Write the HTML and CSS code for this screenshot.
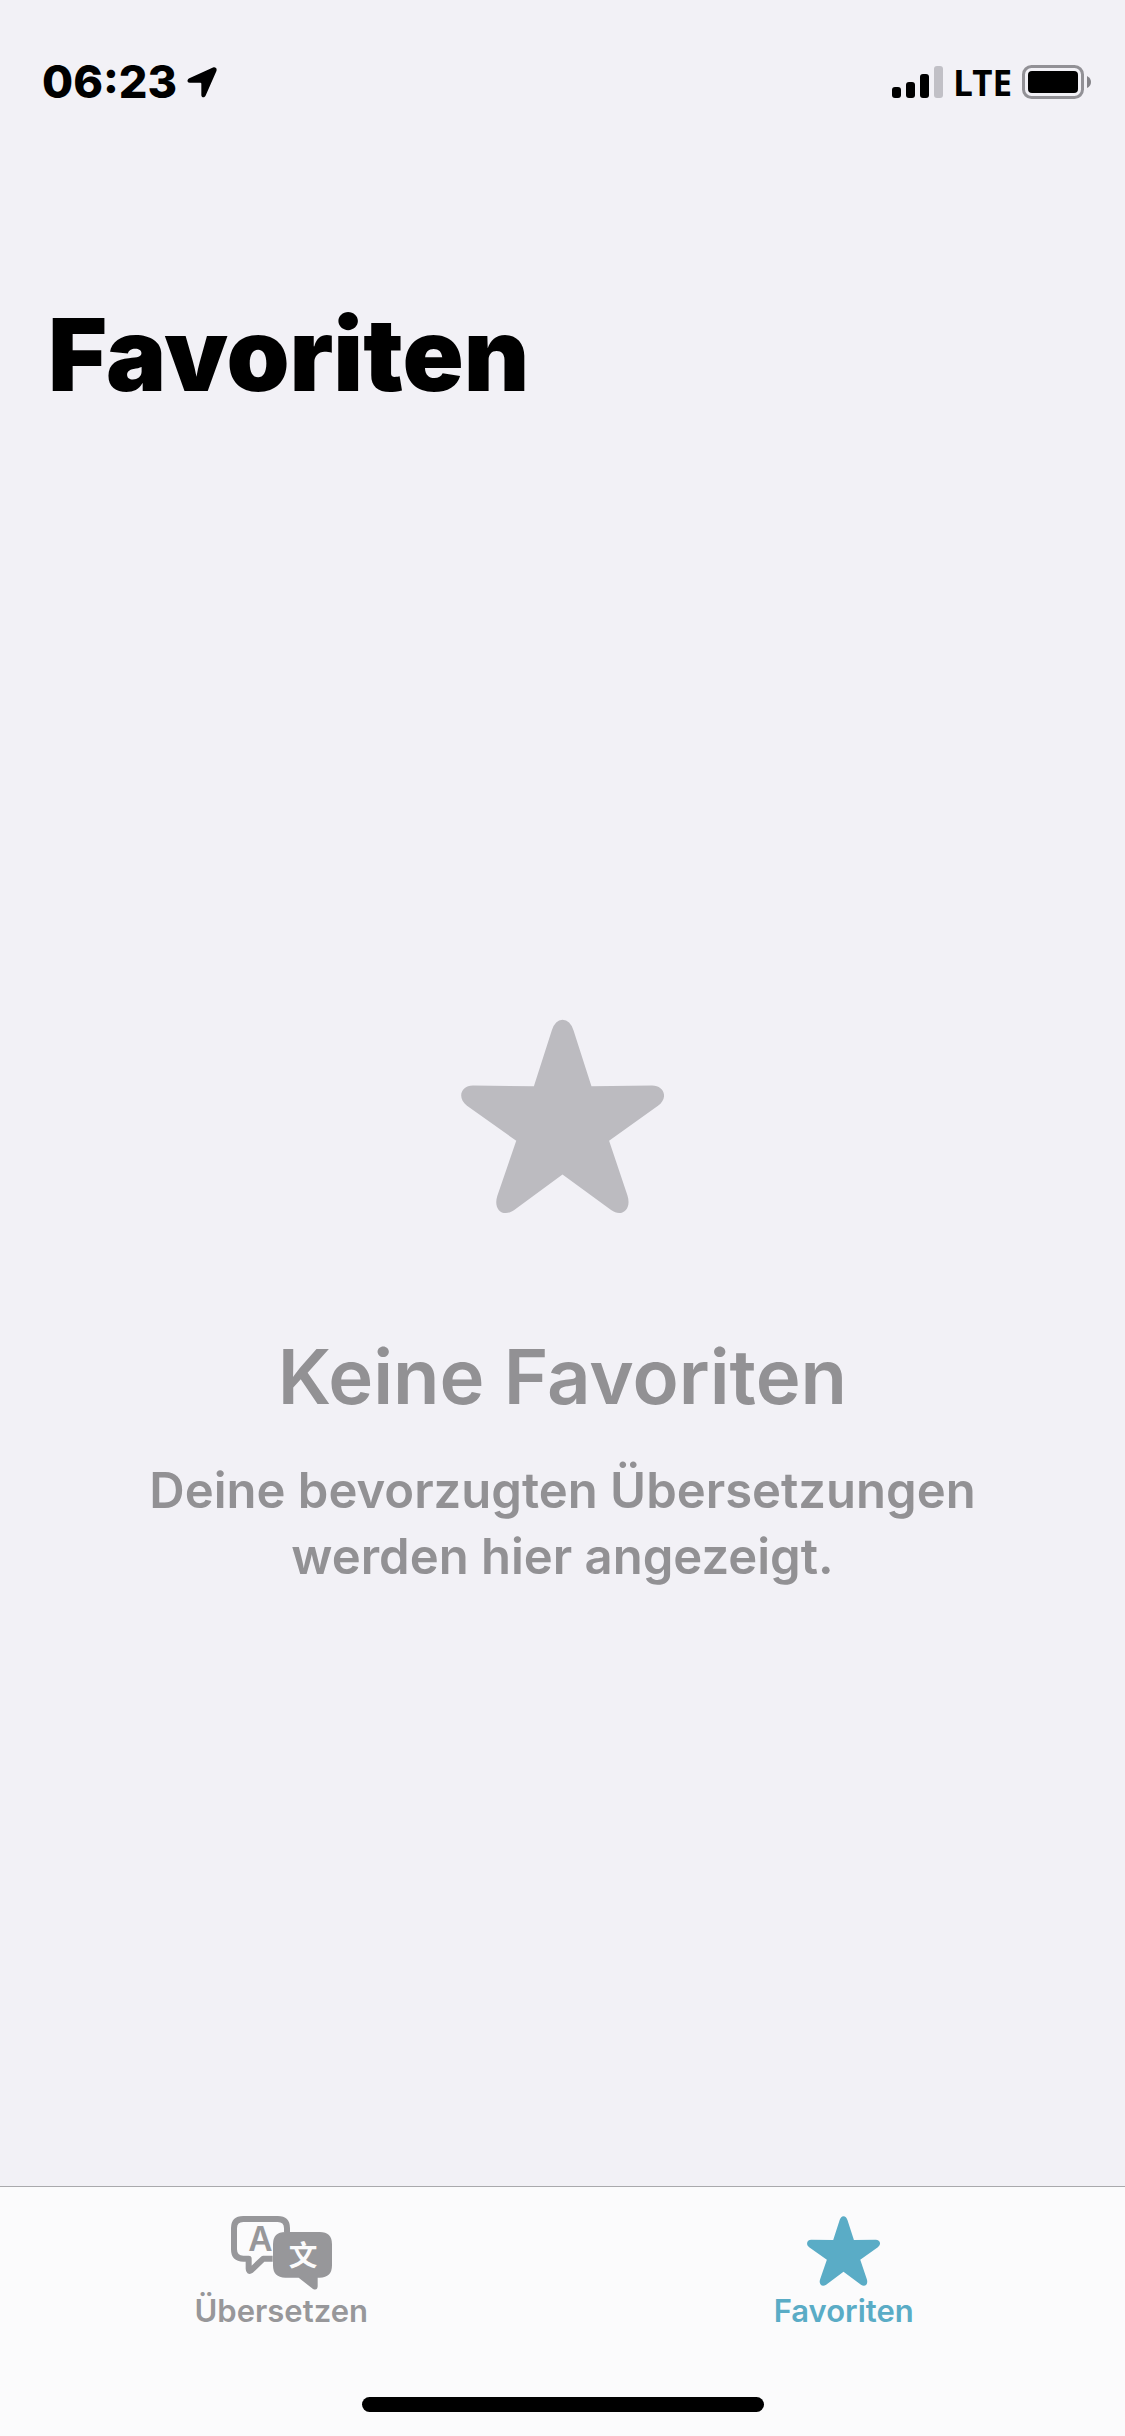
FILE: index.html
```html
<!DOCTYPE html>
<html lang="de">
<head>
<meta charset="utf-8">
<meta name="viewport" content="width=device-width, initial-scale=1">
<title>Favoriten</title>
<link rel="stylesheet" href="styles.css">
</head>
<body>
<svg class="symbols" aria-hidden="true">
  <symbol id="star" viewBox="62 59 610 584">
    <path d="M281 260L335 92Q345 60 367 60Q390 60 400 92L454 260L636 258C673 258 686 295 654 319L507 424L562 588C576 630 545 656 513 632L367 525L222 632C188 656 158 630 171 590L228 424L80 319C49 295 62 258 98 258Z"/>
  </symbol>
</svg>

<div class="status-bar">
  <div class="status-group">
    <time class="clock">06:23</time>
    <svg class="location" viewBox="478 50 90 92" aria-hidden="true">
      <path d="M556 51C564 49 569 54 566 62L534 135C531 143 521 141 521 134V100Q521 97 518 97H486C478 97 477 87 485 83Z"/>
    </svg>
  </div>
  <div class="status-group">
    <svg class="signal" viewBox="0 0 51 32" aria-hidden="true">
      <rect y="21" width="9" height="11" rx="3"/>
      <rect x="14" y="16" width="9" height="16" rx="3"/>
      <rect x="28" y="8" width="9" height="24" rx="3"/>
      <rect class="signal-off" x="42" width="9" height="32" rx="3"/>
    </svg>
    <span class="network">LTE</span>
    <svg class="battery" viewBox="0 0 69 34" aria-hidden="true">
      <rect class="battery-case" x="1.5" y="1.5" width="59" height="31" rx="8"/>
      <rect x="6" y="6" width="50" height="22" rx="4"/>
      <path class="battery-cap" d="M65 11Q69 13 69 17T65 23Z"/>
    </svg>
  </div>
</div>

<header class="page-header">
  <h1>Favoriten</h1>
</header>

<main class="empty-state">
  <svg class="empty-star" aria-hidden="true"><use href="#star"/></svg>
  <h2>Keine Favoriten</h2>
  <p>Deine bevorzugten Übersetzungen werden hier angezeigt.</p>
</main>

<footer class="bottom-bar">
  <nav class="tabs">
    <a class="tab" href="#uebersetzen">
      <svg class="translate-icon" viewBox="153 139 303 222" aria-hidden="true">
        <path class="bubble-line" d="M278 267H250L213 302Q206 307 206 297V267H190Q162 267 162 239V176Q162 148 190 148H293Q321 148 321 176V188"/>
        <text class="bubble-a" x="241" y="245">A</text>
        <path d="M316 187H419Q456 187 456 224V287Q456 324 419 324H413V350Q412 364 399 358L356 324H316Q279 324 279 287V224Q279 187 316 187Z"/>
        <text class="bubble-zh" x="369" y="288">文</text>
      </svg>
      <span>Übersetzen</span>
    </a>
    <a class="tab tab-active" href="#favoriten" aria-current="page">
      <svg class="star-icon" aria-hidden="true"><use href="#star"/></svg>
      <span>Favoriten</span>
    </a>
  </nav>
  <div class="home-indicator"></div>
</footer>
</body>
</html>
```
FILE: styles.css
```css
* {
  box-sizing: border-box;
}

body {
  margin: 0;
  min-height: 100vh;
  display: flex;
  flex-direction: column;
  background: #f2f1f6;
  color: #000;
  font-family: Inter, "Liberation Sans", sans-serif;
}

h1,
h2,
p {
  margin: 0;
}

svg {
  display: block;
  flex: none;
}

.symbols {
  position: absolute;
  width: 0;
  height: 0;
}

/* Status bar */

.status-bar {
  display: flex;
  justify-content: space-between;
  align-items: center;
  height: 132px;
  padding: 32px 34px 0 42px;
}

.status-group {
  display: flex;
  align-items: center;
  gap: 10px;
}

.clock {
  font-size: 45px;
  font-weight: 800;
  line-height: 56px;
}

.location {
  width: 30px;
  height: 31px;
}

.signal {
  width: 51px;
  height: 32px;
}

.signal-off {
  fill: #c1c0c6;
}

.network {
  padding-top: 2px;
  font-family: "Noto Sans", sans-serif;
  font-size: 35px;
  font-weight: 700;
  line-height: 48px;
}

.battery {
  width: 69px;
  height: 34px;
}

.battery-case {
  fill: none;
  stroke: #929196;
  stroke-width: 3;
}

.battery-cap {
  fill: #858489;
}

/* Title */

.page-header {
  padding: 162px 48px 0;
}

h1 {
  font-size: 101px;
  font-weight: 900;
  line-height: 120px;
}

/* Empty state */

.empty-state {
  flex: 1;
  display: flex;
  flex-direction: column;
  align-items: center;
  justify-content: center;
  padding: 8px 120px 0;
  color: #929194;
  text-align: center;
}

.empty-star {
  width: 203px;
  height: 195px;
  fill: #bcbbc0;
}

h2 {
  margin-top: 114px;
  font-size: 76px;
  font-weight: 600;
  line-height: 96px;
}

p {
  max-width: 860px;
  margin-top: 34px;
  font-size: 49px;
  font-weight: 600;
  line-height: 66px;
}

/* Tabs */

.bottom-bar {
  border-top: 1px solid #a9a9ac;
  background: #fbfbfc;
}

.tabs {
  display: flex;
  height: 210px;
  padding-top: 29px;
}

.tab {
  flex: 1;
  display: flex;
  flex-direction: column;
  align-items: center;
  color: #97979a;
  fill: currentColor;
  font-size: 31px;
  font-weight: 600;
  line-height: 36px;
  text-decoration: none;
}

.tab span {
  margin-top: auto;
  margin-bottom: 68px;
}

.tab-active {
  color: #5aacc6;
}

.translate-icon {
  width: 101px;
  height: 74px;
}

.bubble-line {
  fill: none;
  stroke: currentColor;
  stroke-width: 18;
  stroke-linejoin: round;
}

.bubble-a {
  font-size: 100px;
  font-weight: 600;
  text-anchor: middle;
}

.bubble-zh {
  fill: #fbfbfc;
  font-family: "Noto Sans CJK SC", sans-serif;
  font-size: 86px;
  font-weight: 700;
  text-anchor: middle;
}

.star-icon {
  width: 73px;
  height: 70px;
}

.home-indicator {
  width: 36%;
  max-width: 402px;
  height: 15px;
  margin: 0 auto 24px;
  border-radius: 8px;
  background: #000;
}
```
